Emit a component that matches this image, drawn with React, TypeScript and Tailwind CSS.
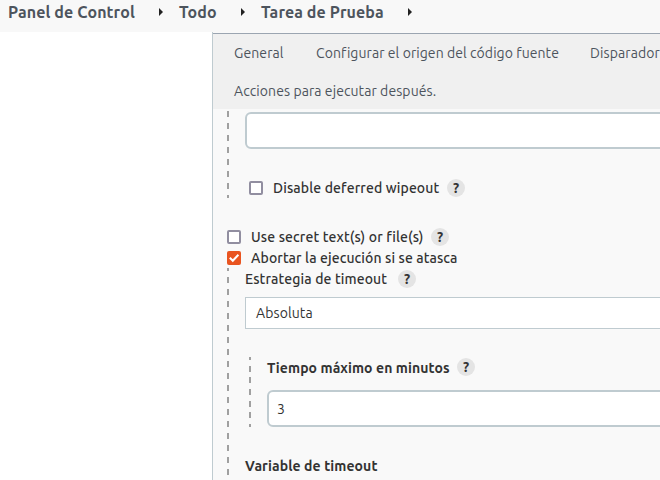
import type { ReactNode } from "react";

function Help({ className = "" }: { className?: string }) {
  return (
    <span className={`flex size-[18px] shrink-0 items-center justify-center rounded-full bg-[#e4e4e4] text-[14px] leading-none font-bold text-[#333] ${className}`}>
      ?
    </span>
  );
}

function Checkbox({ checked = false }: { checked?: boolean }) {
  if (!checked) return <span className="size-[14px] shrink-0 rounded-[2px] border-2 border-[#918ea0] bg-white" />;
  return (
    <span className="size-[14px] shrink-0 rounded-[2px] bg-[#e95420]">
      <svg viewBox="0 0 14 14" className="block size-[14px]" fill="none" stroke="white" strokeWidth="2">
        <path d="M2.8 6.8 5.8 9.8 11.4 3.8" />
      </svg>
    </span>
  );
}

function Arrow({ className }: { className: string }) {
  return (
    <svg viewBox="0 0 4 8" className={`h-2 w-1 shrink-0 ${className}`}>
      <path d="M0 0 4 4 0 8Z" fill="#222" />
    </svg>
  );
}

function Label({ children, className }: { children: ReactNode; className: string }) {
  return <span className={`block shrink-0 whitespace-nowrap leading-5 ${className}`}>{children}</span>;
}

export default function App() {
  return (
    <div className="flex h-[480px] w-[660px] flex-col overflow-hidden bg-white font-['Ubuntu','Noto_Sans',sans-serif] text-[14px] text-[#333]">
      <header className="flex h-8 shrink-0 items-start bg-[#f8f8f8] pt-[2px] pl-2 text-[16px] font-bold text-[#4d545d]">
        <Label className="w-[151px] tracking-[0.1px]">Panel de Control</Label>
        <Arrow className="mt-[6px]" />
        <Label className="ml-4 w-[62px] tracking-[0.1px]">Todo</Label>
        <Arrow className="mt-[6px]" />
        <Label className="ml-4 w-[147px] tracking-[0.08px]">Tarea de Prueba</Label>
        <Arrow className="mt-[6px]" />
      </header>
      <div className="flex min-h-0 flex-1">
        <aside className="w-[212px] shrink-0" />
        <main className="flex min-w-0 flex-1 flex-col overflow-hidden border-l border-[#bfcbd0] bg-[#f9f9f9]">
          <nav className="mt-px h-[76px] shrink-0 border-t border-[#9ba5b1] bg-[#f0f0f0] pl-[21px] text-[#4d545d]">
            <div className="flex pt-[9px]">
              <Label className="w-[82px] tracking-[0.1px]">General</Label>
              <Label className="w-[274px] tracking-[0.07px]">Configurar el origen del código fuente</Label>
              <Label className="tracking-[0.1px]">Disparador</Label>
            </div>
            <Label className="mt-[18px] tracking-[0.08px]">Acciones para ejecutar después.</Label>
          </nav>
          <section className="mt-[2px] flex h-[87px] shrink-0 pl-[14px]">
            <div className="w-[2px] shrink-0 bg-[repeating-linear-gradient(to_bottom,#a0a0a0_0px,#a0a0a0_6px,transparent_6px,transparent_12px)]" />
            <div className="ml-4 flex-1">
              <div className="mt-px h-[37px] w-[500px] rounded-[6px] border-2 border-[#bfcbd0] bg-white" />
              <div className="mt-[29px] flex h-5 items-center pl-1">
                <Checkbox />
                <Label className="ml-[10px] w-[174px] font-medium tracking-[0.13px]">Disable deferred wipeout</Label>
                <Help />
              </div>
            </div>
          </section>
          <div className="mt-[29px] flex h-5 shrink-0 items-center pl-[14px]">
            <Checkbox />
            <Label className="ml-[10px] w-[180px] font-medium tracking-[0.13px]">Use secret text(s) or file(s)</Label>
            <Help />
          </div>
          <div className="mt-px flex h-5 shrink-0 items-center pl-[14px]">
            <Checkbox checked />
            <Label className="ml-[10px] font-medium tracking-[0.1px]">Abortar la ejecución si se atasca</Label>
          </div>
          <section className="flex min-h-0 flex-1 pl-[14px]">
            <div className="w-[2px] shrink-0 bg-[repeating-linear-gradient(to_bottom,#a0a0a0_0px,#a0a0a0_3px,transparent_3px,transparent_9px,#a0a0a0_9px,#a0a0a0_12px)]" />
            <div className="ml-4 flex-1">
              <div className="mt-px flex h-5 items-center">
                <Label className="w-[153px] font-medium tracking-[0.12px]">Estrategia de timeout</Label>
                <Help />
              </div>
              <div className="mt-2 flex h-8 w-[500px] items-center border border-[#bfcbd0] bg-white pl-[10px] tracking-[0.1px]">Absoluta</div>
              <div className="mt-7 flex h-[70px] pl-1">
                <div className="w-[2px] shrink-0 bg-[repeating-linear-gradient(to_bottom,#a0a0a0_0px,#a0a0a0_3px,transparent_3px,transparent_8.6px,#a0a0a0_8.6px,#a0a0a0_11.67px)]" />
                <div className="ml-4">
                  <div className="flex h-5 items-center">
                    <Label className="w-[190px] pt-px font-bold tracking-[0.08px]">Tiempo máximo en minutos</Label>
                    <Help />
                  </div>
                  <div className="mt-[13px] flex h-[37px] w-[500px] items-center rounded-[6px] border-2 border-[#bfcbd0] bg-white pt-px pl-2">3</div>
                </div>
              </div>
              <Label className="mt-[29px] font-bold tracking-[0.1px]">Variable de timeout</Label>
            </div>
          </section>
        </main>
      </div>
    </div>
  );
}
